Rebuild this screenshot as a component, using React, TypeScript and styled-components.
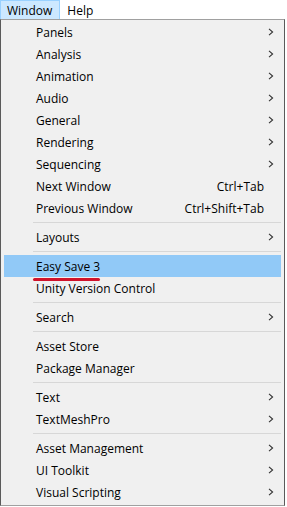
import React from "react";
import styled, { createGlobalStyle } from "styled-components";

const Global = createGlobalStyle`
  html, body { margin: 0; padding: 0; background: #ffffff; }
  body { font-family: "Open Sans", "Noto Sans", "Noto Sans CJK KR", sans-serif; }
`;

const Page = styled.div`
  width: 287px;
  height: 507px;
  position: relative;
  overflow: hidden;
  background: #ffffff;
`;

const MenuBar = styled.div`
  display: flex;
  height: 19px;
  align-items: stretch;
  background: #ffffff;
`;

const BarItem = styled.div<{ $active?: boolean }>`
  display: flex;
  align-items: center;
  padding: 0 7px 0 6px;
  font-size: 12px;
  color: #000;
  box-sizing: border-box;
  background: ${(p) => (p.$active ? "#cce8ff" : "transparent")};
  border: 1px solid ${(p) => (p.$active ? "#99d1ff" : "transparent")};
  border-bottom: none;
`;

const Dropdown = styled.div`
  width: 285px;
  height: 487px;
  box-sizing: border-box;
  background: #f0f0f0;
  border: 1px solid #a0a0a0;
  border-left: 1px solid #5a5a5a;
  border-right: 1px solid #5a5a5a;
  padding: 1px 3px 2px 3px;
  display: flex;
  flex-direction: column;
`;

const Row = styled.div<{ $hl?: boolean }>`
  height: 22px;
  display: flex;
  align-items: center;
  position: relative;
  background: ${(p) => (p.$hl ? "#91c9f7" : "transparent")};
  font-size: 12px;
  color: #000;
  padding-left: 32px;
  padding-right: 7px;
`;

const Label = styled.span`
  flex: 1;
  white-space: nowrap;
`;

const Shortcut = styled.span`
  white-space: nowrap;
  margin-right: 10px;
`;

const Sep = styled.div`
  height: 7px;
  display: flex;
  align-items: center;
  padding-left: 29px;
  &::after {
    content: "";
    flex: 1;
    height: 1px;
    background: #d7d7d7;
  }
`;

const Underline = styled.div`
  position: absolute;
  left: 29px;
  top: 23px;
  width: 67px;
  height: 3px;
  border-radius: 2px;
  background: #d0132b;
`;

const Chevron = () => (
  <svg width="6" height="8" viewBox="0 0 6 8" style={{ display: "block" }}>
    <path d="M1 0.8 L4.6 4 L1 7.2" fill="none" stroke="#333" strokeWidth="1.1" />
  </svg>
);

type Item =
  | { sep: true }
  | { label: string; sub?: boolean; shortcut?: string; hl?: boolean; mark?: boolean };

const items: Item[] = [
  { label: "Panels", sub: true },
  { label: "Analysis", sub: true },
  { label: "Animation", sub: true },
  { label: "Audio", sub: true },
  { label: "General", sub: true },
  { label: "Rendering", sub: true },
  { label: "Sequencing", sub: true },
  { label: "Next Window", shortcut: "Ctrl+Tab" },
  { label: "Previous Window", shortcut: "Ctrl+Shift+Tab" },
  { sep: true },
  { label: "Layouts", sub: true },
  { sep: true },
  { label: "Easy Save 3", hl: true, mark: true },
  { label: "Unity Version Control" },
  { sep: true },
  { label: "Search", sub: true },
  { sep: true },
  { label: "Asset Store" },
  { label: "Package Manager" },
  { sep: true },
  { label: "Text", sub: true },
  { label: "TextMeshPro", sub: true },
  { sep: true },
  { label: "Asset Management", sub: true },
  { label: "UI Toolkit", sub: true },
  { label: "Visual Scripting", sub: true },
];

export default function App() {
  return (
    <Page>
      <Global />
      <MenuBar>
        <BarItem $active>Window</BarItem>
        <BarItem>Help</BarItem>
      </MenuBar>
      <Dropdown>
        {items.map((it, i) =>
          "sep" in it ? (
            <Sep key={i} />
          ) : (
            <Row key={i} $hl={it.hl}>
              <Label>{it.label}</Label>
              {it.shortcut && <Shortcut>{it.shortcut}</Shortcut>}
              {it.sub && <Chevron />}
              {it.mark && <Underline />}
            </Row>
          )
        )}
      </Dropdown>
    </Page>
  );
}
